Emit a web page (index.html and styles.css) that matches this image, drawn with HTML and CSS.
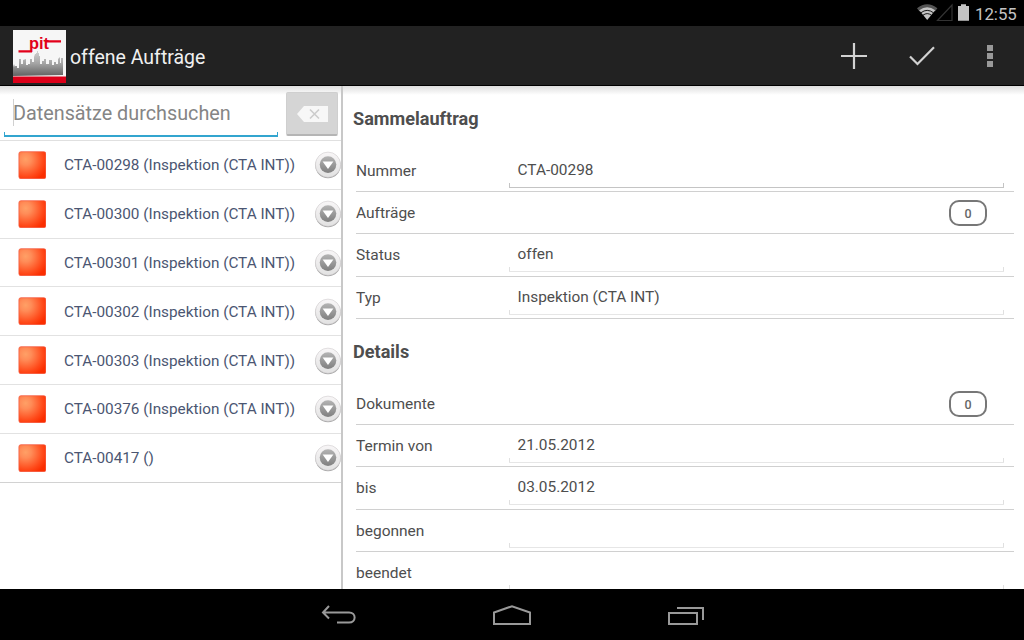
FILE: index.html
```html
<!DOCTYPE html>
<html lang="de">
<head>
    <meta charset="UTF-8">
    <meta name="viewport" content="width=device-width, initial-scale=1.0">
    <title>offene Aufträge</title>
    <link rel="stylesheet" href="styles.css">
</head>
<body>

    <!-- Shared icons -->
    <svg class="defs" width="0" height="0">
        <defs>
            <radialGradient id="red" cx="0.25" cy="0.28" r="0.85">
                <stop offset="0" stop-color="#ffa066"/>
                <stop offset="0.25" stop-color="#ff8c58"/>
                <stop offset="0.75" stop-color="#ff4a1a"/>
                <stop offset="1" stop-color="#fb2e00"/>
            </radialGradient>
            <linearGradient id="ring" x1="0" y1="0" x2="0" y2="1">
                <stop offset="0" stop-color="#f8f6f7"/>
                <stop offset="1" stop-color="#e2e2e2"/>
            </linearGradient>
            <linearGradient id="knob" x1="0" y1="0" x2="0" y2="1">
                <stop offset="0" stop-color="#b4b4b4"/>
                <stop offset="1" stop-color="#808080"/>
            </linearGradient>
            <linearGradient id="sky" x1="0" y1="0" x2="0" y2="1">
                <stop offset="0" stop-color="#d2d2d2"/>
                <stop offset="0.5" stop-color="#a4a4a4"/>
                <stop offset="1" stop-color="#626262"/>
            </linearGradient>
            <symbol id="square" viewBox="0 0 28 28">
                <rect x="0.9" y="0.7" width="27" height="27" rx="2" fill="url(#red)" stroke="#f4553c" stroke-opacity="0.7"/>
            </symbol>
            <symbol id="arrow" viewBox="0 0 28 28">
                <circle cx="14" cy="14.5" r="12.7" fill="#a2a2a2"/>
                <circle cx="14" cy="13.7" r="12.6" fill="url(#ring)" stroke="#d0cdcf" stroke-width="0.6"/>
                <circle cx="14" cy="13.6" r="8.3" fill="url(#knob)"/>
                <path d="M8.6 10.6h10.8L14 18z" fill="#fff"/>
            </symbol>
        </defs>
    </svg>

    <div class="status-bar">
        <svg width="60" height="22" viewBox="0 0 60 22">
            <path d="M0 8.2Q10.2 0.4 20.4 8.2L17.9 11.4Q10.2 5.6 2.5 11.4z" fill="#555"/>
            <path d="M2.2 10.2Q10.2 4.2 18.2 10.2L10.2 20z" fill="#c4c4c4"/>
            <path d="M4 12.7Q10.2 8 16.4 12.7M6 15.2Q10.2 12 14.4 15.2" fill="none" stroke="#000" stroke-width="0.9"/>
            <path d="M20.5 20.5L35 5v15.5z" fill="none" stroke="#333" stroke-width="1.2"/>
            <path d="M41 6h3V4.2h5V6h3v14.8H41z" fill="#c4c4c4"/>
        </svg>
        <span class="clock">12:55</span>
    </div>

    <header class="action-bar">
        <svg class="logo" width="53" height="53" viewBox="0 0 53 53">
            <rect width="53" height="53" fill="#f6f6f6"/>
            <path d="M0 46V37l1-3 1 3v-1h2v2h2v-9h2v5h2v-4l3-1v6h2v-1h2v-5h2v3h2v-5l1-3h1v-1h1v-2h1v2h1v3h1v8h2v-3h2v-2h2v5h3v-4h3v5h2v-3h2v2h2v-5l2-2v6h1v-5h2v17z" fill="url(#sky)"/>
            <rect y="46.5" width="53" height="6.5" fill="#dc0019"/>
            <text class="logo-text" x="16" y="18.5" textLength="20" lengthAdjust="spacingAndGlyphs">pit</text>
            <path d="M5.5 21.3h13.5M33 11.3h15" fill="none" stroke="#e2001a" stroke-width="2.2"/>
        </svg>
        <h1>offene Aufträge</h1>
        <div class="actions">
            <svg width="26" height="26" viewBox="0 0 26 26"><path d="M13 0v26M0 13h26" stroke="#d2d2d2" stroke-width="2.2"/></svg>
            <svg width="26" height="20" viewBox="0 0 26 20"><path d="M1 10.5L8.5 18L25 1.2" fill="none" stroke="#d2d2d2" stroke-width="2.2"/></svg>
            <svg width="6" height="22" viewBox="0 0 6 22"><path d="M0 0h6v6H0zM0 8h6v6H0zM0 16h6v6H0z" fill="#999"/></svg>
        </div>
    </header>

    <main>
        <!-- Order list -->
        <section class="list">
            <div class="search">
                <div class="search-field">Datensätze durchsuchen</div>
                <button class="clear">
                    <svg width="31" height="16" viewBox="0 0 31 16">
                        <path d="M0 8L7 0h24v16H7z" fill="#f7f7f7"/>
                        <path d="M13 3.5l9 9M22 3.5l-9 9" stroke="#ccc" stroke-width="1.6"/>
                    </svg>
                </button>
            </div>
            <ul>
                <li><svg class="square"><use href="#square"/></svg><span>CTA-00298 (Inspektion (CTA INT))</span><svg class="arrow"><use href="#arrow"/></svg></li>
                <li><svg class="square"><use href="#square"/></svg><span>CTA-00300 (Inspektion (CTA INT))</span><svg class="arrow"><use href="#arrow"/></svg></li>
                <li><svg class="square"><use href="#square"/></svg><span>CTA-00301 (Inspektion (CTA INT))</span><svg class="arrow"><use href="#arrow"/></svg></li>
                <li><svg class="square"><use href="#square"/></svg><span>CTA-00302 (Inspektion (CTA INT))</span><svg class="arrow"><use href="#arrow"/></svg></li>
                <li><svg class="square"><use href="#square"/></svg><span>CTA-00303 (Inspektion (CTA INT))</span><svg class="arrow"><use href="#arrow"/></svg></li>
                <li><svg class="square"><use href="#square"/></svg><span>CTA-00376 (Inspektion (CTA INT))</span><svg class="arrow"><use href="#arrow"/></svg></li>
                <li><svg class="square"><use href="#square"/></svg><span>CTA-00417 ()</span><svg class="arrow"><use href="#arrow"/></svg></li>
            </ul>
        </section>

        <!-- Order details -->
        <section class="detail">
            <h2>Sammelauftrag</h2>
            <div class="row"><label>Nummer</label><div class="field editable">CTA-00298</div></div>
            <div class="row"><label>Aufträge</label><span class="badge">0</span></div>
            <div class="row"><label>Status</label><div class="field">offen</div></div>
            <div class="row"><label>Typ</label><div class="field">Inspektion (CTA INT)</div></div>

            <h2>Details</h2>
            <div class="row"><label>Dokumente</label><span class="badge">0</span></div>
            <div class="row"><label>Termin von</label><div class="field">21.05.2012</div></div>
            <div class="row"><label>bis</label><div class="field">03.05.2012</div></div>
            <div class="row"><label>begonnen</label><div class="field"></div></div>
            <div class="row"><label>beendet</label><div class="field"></div></div>
        </section>
    </main>

    <nav class="nav-bar">
        <svg width="36" height="20" viewBox="0 0 36 20"><path d="M8 1L2 7.5L8 13.5M2 7.5h26c7.5 0 7.5 10 0 10H16" fill="none" stroke="#999" stroke-width="2"/></svg>
        <svg width="38" height="20" viewBox="0 0 38 20"><path d="M1 19V7.5L19 1.2L37 7.5V19z" fill="none" stroke="#999" stroke-width="2"/></svg>
        <svg width="37" height="20" viewBox="0 0 37 20"><path d="M2 8h28v11H2zM10 3h26v12" fill="none" stroke="#999" stroke-width="2"/></svg>
    </nav>

</body>
</html>
```
FILE: styles.css
```css
/* General Reset */
* {
    margin: 0;
    padding: 0;
    box-sizing: border-box;
    font-family: Roboto, sans-serif;
}

body {
    width: 1024px;
    height: 640px;
    display: flex;
    flex-direction: column;
    overflow: hidden;
    background: #000;
    color: #4e4e4e;
}

svg {
    display: block;
    flex: none;
}

.defs {
    position: absolute;
}

/* Status Bar */
.status-bar {
    height: 26px;
    display: flex;
    justify-content: flex-end;
    padding-right: 7px;
}

.clock {
    width: 42px;
    color: #c4c4c4;
    font-size: 16.8px;
    line-height: 28px;
    white-space: nowrap;
}

.status-bar svg {
    margin-right: -2px;
}

/* Action Bar */
.action-bar {
    height: 60px;
    display: flex;
    align-items: center;
    padding: 1px 31px 0 13px;
    background: #222;
    border-bottom: 1px solid #000;
}

.logo {
    margin-top: 1px;
}

.logo-text {
    fill: #e2001a;
    font-family: "Liberation Sans", sans-serif;
    font-size: 16px;
    font-weight: 700;
}

.action-bar h1 {
    margin: 4px 0 0 4px;
    color: #f0f0f0;
    font-size: 19.5px;
    font-weight: 400;
    line-height: 24px;
}

.actions {
    display: flex;
    align-items: center;
    margin-left: auto;
    gap: 42px;
}

.actions svg:last-child {
    margin-left: 10px;
}

/* Content */
main {
    height: 503px;
    display: flex;
    background: linear-gradient(#dedede, #fff 9px);
}

.list {
    width: 343px;
    border-right: 2px solid #c8c8c8;
}

.search {
    height: 55px;
    display: flex;
    padding: 5px 3px 0 4px;
    border-bottom: 1px solid #e0e0e0;
}

.search-field {
    position: relative;
    width: 274px;
    height: 46px;
    padding-left: 9px;
    border-bottom: 2px solid #33a5cf;
    color: #858585;
    font-size: 19.8px;
    line-height: 45px;
}

/* Upturned ends of the input line */
.search-field::before {
    content: "";
    position: absolute;
    left: 0;
    right: 0;
    bottom: 0;
    height: 3px;
    border: solid #33a5cf;
    border-width: 0 1px;
}

/* Text cursor */
.search-field::after {
    content: "";
    position: absolute;
    left: 9px;
    top: 8px;
    width: 1px;
    height: 27px;
    background: #d0d0d0;
}

.clear {
    width: 52px;
    height: 44px;
    margin: 1px 0 0 8px;
    display: flex;
    align-items: center;
    justify-content: center;
    background: #d5d5d5;
    border: 1px solid #cfcfcf;
    border-bottom: 2px solid #b5b5b5;
    border-radius: 2px;
}

ul {
    list-style: none;
}

li {
    height: 48.8px;
    display: flex;
    align-items: center;
    padding: 0 0 0 18px;
    border-bottom: 1px solid #e2e2e2;
    color: #4b5672;
    font-size: 15.3px;
}

li:last-child {
    border-color: #d2d2d2;
}

li span {
    flex: none;
    width: 250px;
    margin: 1px 0 0 18px;
    white-space: nowrap;
}

.square, .arrow {
    width: 28px;
    height: 28px;
}

.arrow {
    margin-top: 1px;
}

/* Details */
.detail {
    width: 681px;
    padding: 0 10px 0 13px;
    overflow: hidden;
}

h2 {
    height: 63.7px;
    margin-left: -3px;
    font-size: 18.1px;
    font-weight: 700;
    line-height: 65px;
}

.row {
    height: 42.35px;
    display: flex;
    border-bottom: 1px solid #d0d0d0;
    font-size: 15.5px;
}

label {
    width: 153px;
    line-height: 43.6px;
}

.field {
    position: relative;
    width: 495px;
    height: 38px;
    padding-left: 8.5px;
    border-bottom: 1px solid #e6e6e6;
    font-size: 15.4px;
    line-height: 41.6px;
}

/* Upturned ends of the field line */
.field::after {
    content: "";
    position: absolute;
    left: 0;
    right: 0;
    bottom: 0;
    height: 4px;
    border: solid #e0e0e0;
    border-width: 0 1px;
}

.field.editable, .field.editable::after {
    border-color: #c4c4c4;
}

.badge {
    width: 38px;
    height: 26px;
    margin: 8px 0 0 440px;
    border: 2px solid #777;
    border-radius: 10px;
    color: #666;
    font-size: 12.5px;
    font-weight: 500;
    line-height: 23px;
    text-align: center;
}

/* Navigation Bar */
.nav-bar {
    height: 51px;
    display: flex;
    justify-content: center;
    align-items: center;
    gap: 136px;
    padding-top: 1px;
}
```
